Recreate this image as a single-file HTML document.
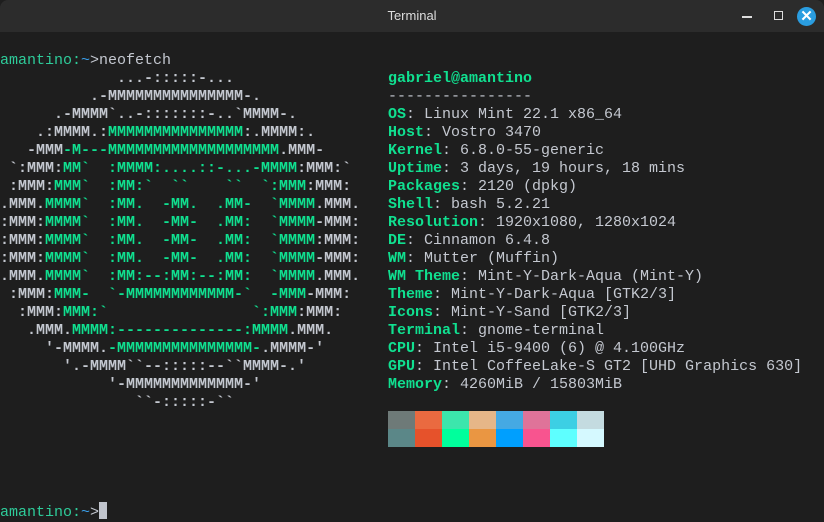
<!DOCTYPE html>
<html><head><meta charset="utf-8"><style>
html,body{margin:0;padding:0;background:#1e1e1e;width:824px;height:520px;overflow:hidden}
.tb{position:absolute;left:0;top:0;width:824px;height:32px;background:#2c2c2c;border-radius:8px 8px 0 0;color:#dcdcdc;font:13px "Liberation Sans",sans-serif;text-align:center;line-height:32px}
.term{position:absolute;left:0;top:52px;width:824px;height:468px;font:15px/18px "Liberation Mono","DejaVu Sans Mono",monospace;color:#c4c8d0;white-space:pre}
.g{color:#10e090}
.gp{color:#2ecc9a}
.b{color:#3a9ee8}
.art{position:absolute;left:0;top:18px;font-weight:bold}
.info{position:absolute;left:388px;top:18px}
.info .g{font-weight:bold}
.p1{position:absolute;left:0;top:0}
.p2{position:absolute;left:0;top:450px}
.sw{position:absolute;left:388px;top:411px;display:grid;grid-template-columns:repeat(8,27px);grid-template-rows:18px 18px}
.cur{display:inline-block;width:8px;height:17px;background:#c0c4cc;vertical-align:-3px}
</style></head><body>
<div class="tb">Terminal
<div style="position:absolute;left:742px;top:16px;width:10px;height:1.5px;background:#ddd"></div>
<div style="position:absolute;left:774px;top:11px;width:7px;height:7px;border:1.5px solid #ddd"></div>
<div style="position:absolute;left:797px;top:7px;width:19px;height:19px;border-radius:50%;background:#2a9de0;color:#fff;font:bold 15px/19px 'Liberation Sans',sans-serif">✕</div>
</div>
<div class="term"><div class="p1"><span class="gp">amantino:</span><span class="b">~</span>&gt;neofetch</div><div class="art">             ...-:::::-...
          .-MMMMMMMMMMMMMMM-.
      .-MMMM`..-:::::::-..`MMMM-.
    .:MMMM.:<span class="g">MMMMMMMMMMMMMMM</span>:.MMMM:.
   -MMM<span class="g">-M---MMMMMMMMMMMMMMMMMMM</span>.MMM-
 `:MMM:<span class="g">MM`  :MMMM:....::-...-MMMM</span>:MMM:`
 :MMM:<span class="g">MMM`  :MM:`  ``    ``  `:MMM</span>:MMM:
.MMM.<span class="g">MMMM`  :MM.  -MM.  .MM-  `MMMM</span>.MMM.
:MMM:<span class="g">MMMM`  :MM.  -MM-  .MM:  `MMMM</span>-MMM:
:MMM:<span class="g">MMMM`  :MM.  -MM-  .MM:  `MMMM</span>:MMM:
:MMM:<span class="g">MMMM`  :MM.  -MM-  .MM:  `MMMM</span>-MMM:
.MMM.<span class="g">MMMM`  :MM:--:MM:--:MM:  `MMMM</span>.MMM.
 :MMM:<span class="g">MMM-  `-MMMMMMMMMMMM-`  -MMM</span>-MMM:
  :MMM:<span class="g">MMM:`                `:MMM</span>:MMM:
   .MMM.<span class="g">MMMM:--------------:MMMM</span>.MMM.
     '-MMMM.<span class="g">-MMMMMMMMMMMMMMM-</span>.MMMM-'
       '.-MMMM``--:::::--``MMMM-.'
            '-MMMMMMMMMMMMM-'
               ``-:::::-``</div><div class="info"><span class="g">gabriel@amantino</span>
----------------
<span class="g">OS</span>: Linux Mint 22.1 x86_64
<span class="g">Host</span>: Vostro 3470
<span class="g">Kernel</span>: 6.8.0-55-generic
<span class="g">Uptime</span>: 3 days, 19 hours, 18 mins
<span class="g">Packages</span>: 2120 (dpkg)
<span class="g">Shell</span>: bash 5.2.21
<span class="g">Resolution</span>: 1920x1080, 1280x1024
<span class="g">DE</span>: Cinnamon 6.4.8
<span class="g">WM</span>: Mutter (Muffin)
<span class="g">WM Theme</span>: Mint-Y-Dark-Aqua (Mint-Y)
<span class="g">Theme</span>: Mint-Y-Dark-Aqua [GTK2/3]
<span class="g">Icons</span>: Mint-Y-Sand [GTK2/3]
<span class="g">Terminal</span>: gnome-terminal
<span class="g">CPU</span>: Intel i5-9400 (6) @ 4.100GHz
<span class="g">GPU</span>: Intel CoffeeLake-S GT2 [UHD Graphics 630]
<span class="g">Memory</span>: 4260MiB / 15803MiB</div><div class="p2"><span class="gp">amantino:</span><span class="b">~</span>&gt;<span class="cur"></span></div></div>
<div class="sw">
<div style="background:#6e7a78"></div><div style="background:#ea6a40"></div><div style="background:#3ce6ac"></div><div style="background:#e6b688"></div><div style="background:#45a9e3"></div><div style="background:#df7399"></div><div style="background:#3ccfe4"></div><div style="background:#c4dbe0"></div>
<div style="background:#5b8788"></div><div style="background:#e6522b"></div><div style="background:#00ff9c"></div><div style="background:#ea9642"></div><div style="background:#009ffe"></div><div style="background:#f8548f"></div><div style="background:#5effff"></div><div style="background:#d5f9ff"></div>
</div>
</body></html>
